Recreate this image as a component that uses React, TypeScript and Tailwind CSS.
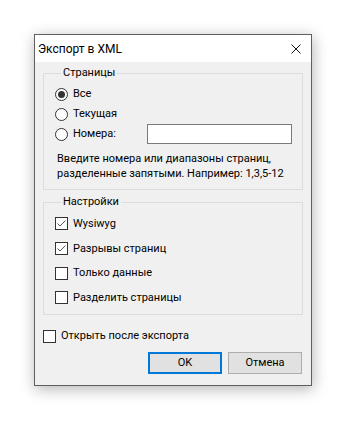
import React, { useState } from 'react';

function Radio({ checked, label }: { checked?: boolean; label: string }) {
  return (
    <label className="flex items-center">
      <span className="w-[13px] h-[13px] rounded-full border border-[#333] bg-white flex items-center justify-center">
        {checked && <span className="w-[7px] h-[7px] rounded-full bg-[#333]" />}
      </span>
      <span className="ml-[5px]">{label}</span>
    </label>
  );
}

function Check({ checked, label, className = '' }: { checked?: boolean; label: string; className?: string }) {
  return (
    <label className={`flex items-center ${className}`}>
      <span className="w-[13px] h-[13px] border border-[#333] bg-white flex items-center justify-center">
        {checked && (
          <svg width="11" height="11" viewBox="0 0 11 11">
            <polyline points="1.5,5.5 4,8 9.5,2.5" fill="none" stroke="#555" strokeWidth="1" />
          </svg>
        )}
      </span>
      <span className="ml-[5px]">{label}</span>
    </label>
  );
}

export default function App() {
  const [pages] = useState('');

  return (
    <div className="min-h-[430px] bg-white pt-[34px] pl-[34px] font-['Roboto',sans-serif] text-[11px] leading-[16px] text-black">
      <div className="w-[278px] h-[352px] border border-[#5f5f5f] bg-[#f0f0f0] shadow-[1px_3px_14px_rgba(0,0,0,0.3)] flex flex-col">
        {/* Title bar */}
        <div className="shrink-0 h-[27px] bg-white flex items-center justify-between pl-[3px] pr-[10px]">
          <span className="text-[12px]">Экспорт в XML</span>
          <svg width="10" height="10" viewBox="0 0 10 10">
            <path d="M0.5 0.5 L9.5 9.5 M9.5 0.5 L0.5 9.5" stroke="#111" strokeWidth="1" />
          </svg>
        </div>

        <div className="flex-1 flex flex-col px-[8px]">
          {/* Pages group */}
          <fieldset className="min-w-0 mt-[3px] border border-[#dcdcdc] pl-[11px] pr-[10px] pb-[8px]">
            <legend className="ml-[6px] px-[2px]">Страницы</legend>
            <div className="pt-[3px] flex flex-col">
              <div className="h-[20px] flex items-center">
                <Radio checked label="Все" />
              </div>
              <div className="h-[20px] flex items-center">
                <Radio label="Текущая" />
              </div>
              <div className="h-[20px] flex items-center">
                <Radio label="Номера:" />
                <input
                  className="ml-auto w-[145px] h-[20px] border border-[#7a7a7a] bg-white outline-none px-1"
                  value={pages}
                  readOnly
                />
              </div>
            </div>
            <p className="mt-[7px] ml-[2px] leading-[15px] whitespace-nowrap">
              Введите номера или диапазоны страниц,
              <br />
              разделенные запятыми. Например: 1,3,5-12
            </p>
          </fieldset>

          {/* Settings group */}
          <fieldset className="min-w-0 mt-[4px] border border-[#dcdcdc] pl-[11px] pr-[10px] pt-[1px] pb-[4px]">
            <legend className="ml-[6px] px-[2px]">Настройки</legend>
            <Check checked label="Wysiwyg" className="h-[25px]" />
            <Check checked label="Разрывы страниц" className="h-[25px]" />
            <Check label="Только данные" className="h-[24px]" />
            <Check label="Разделить страницы" className="h-[25px]" />
          </fieldset>

          <Check label="Открыть после экспорта" className="mt-[9px] h-[24px]" />

          <div className="mt-[4px] flex justify-end gap-[6px] pr-[1px]">
            <button className="w-[74px] h-[22px] border-2 border-[#0078d7] bg-[#e1e1e1]">OK</button>
            <button className="w-[74px] h-[22px] border border-[#adadad] bg-[#e1e1e1]">Отмена</button>
          </div>
        </div>
      </div>
    </div>
  );
}
